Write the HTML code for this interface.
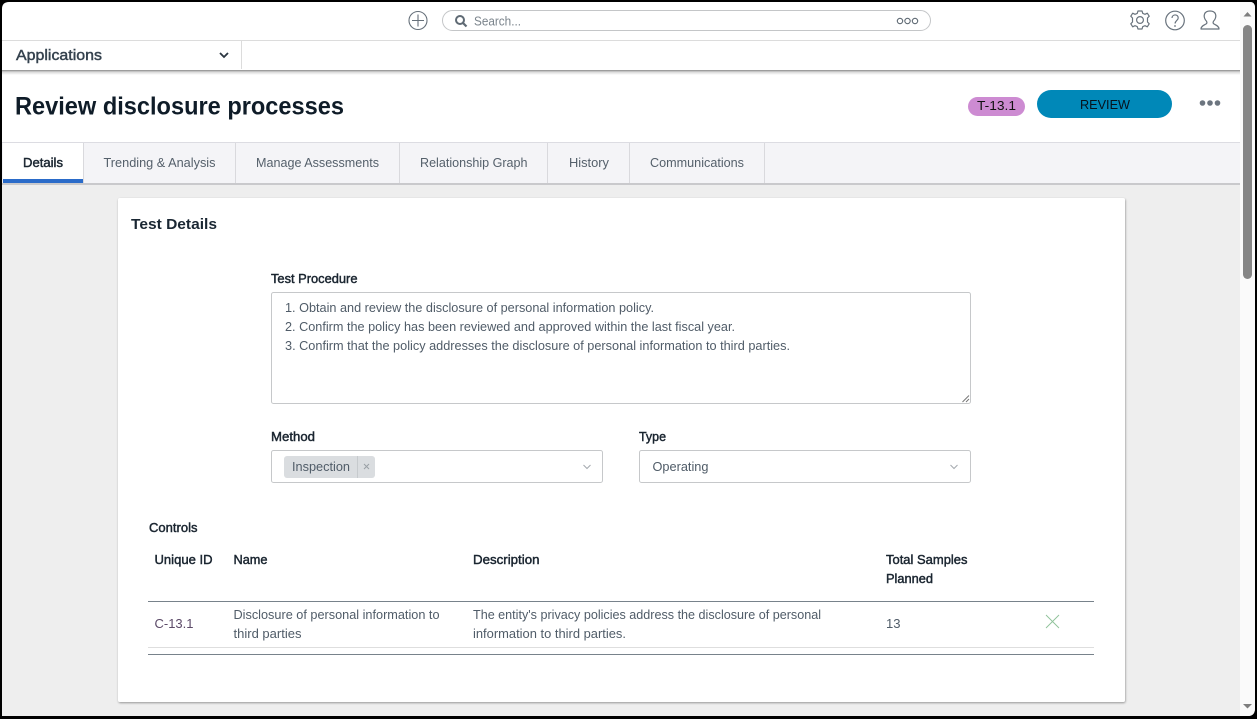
<!DOCTYPE html>
<html lang="en"><head><meta charset="utf-8"><title>Review disclosure processes</title>
<style>
html,body{margin:0;padding:0;width:1257px;height:719px;overflow:hidden;background:#000}
svg{position:absolute;left:0;top:0;display:block}
text{font-family:"Liberation Sans",sans-serif;font-size:12.5px;fill:#55606b}
.b{fill:#1a2530;stroke:#1a2530;stroke-width:.45px;font-size:13px}
.d{fill:#505c68}
</style></head><body>
<svg width="1257" height="719" viewBox="0 0 1257 719" xmlns="http://www.w3.org/2000/svg">
<defs>
<clipPath id="w"><path d="M9 2H1250Q1255 2 1255 8V708Q1255 716 1248 716H2V9Q2 2 9 2Z"/></clipPath>
<linearGradient id="sh" x1="0" y1="0" x2="0" y2="1"><stop offset="0" stop-color="#8a8a8a"/><stop offset=".4" stop-color="#d8d8d8"/><stop offset="1" stop-color="#fff"/></linearGradient>
<filter id="cs" x="-2%" y="-2%" width="104%" height="104%"><feDropShadow dx="0.500" dy="1" stdDeviation="1" flood-color="#000" flood-opacity=".38"/></filter>
</defs>
<rect width="1257" height="719" fill="#000"/>
<g clip-path="url(#w)">
<rect x="0" y="0" width="1257" height="719" fill="#fff"/>
<!-- top bar -->
<rect x="2" y="40" width="1238" height="1" fill="#dcdcdc"/>
<rect x="241" y="41" width="1" height="28" fill="#dcdcdc"/>
<rect x="2" y="70" width="1238" height="5" fill="url(#sh)"/>
<circle cx="418" cy="20.500" r="9" fill="none" stroke="#66707a" stroke-width="1.100"/>
<path d="M418 14.500V26.500M412 20.500H424" stroke="#66707a" stroke-width="1.100"/>
<rect x="442.500" y="10.500" width="488" height="20" rx="10" fill="#fff" stroke="#c4c6c8"/>
<circle cx="460" cy="20" r="4" fill="none" stroke="#5f6a74" stroke-width="2"/>
<path d="M463 23L466.500 26.500" stroke="#5f6a74" stroke-width="2.200"/>
<text x="474" y="25.500" textLength="47" lengthAdjust="spacingAndGlyphs" style="fill:#7b848c">Search...</text>
<g fill="none" stroke="#5f6a74" stroke-width="1.100"><circle cx="900" cy="21" r="2.700"/><circle cx="907.500" cy="21" r="2.700"/><circle cx="915" cy="21" r="2.700"/></g>
<!-- gear, help, user -->
<g fill="none" stroke="#69737d" stroke-width="1.200" stroke-linejoin="round">
<circle cx="1140" cy="20" r="3.400"/>
<path d="M1138 11H1142L1142.800 13.400L1145 14.300L1147.300 13.200L1149.200 16.200L1147.500 18V22L1149.200 23.800L1147.300 26.800L1145 25.700L1142.800 26.600L1142 29H1138L1137.200 26.600L1135 25.700L1132.700 26.800L1130.800 23.800L1132.500 22V18L1130.800 16.200L1132.700 13.200L1135 14.300L1137.200 13.400Z"/>
<circle cx="1175" cy="20.500" r="9.300"/>
<path d="M1172 18C1172.200 13.800 1178.300 14 1178.200 18C1178.100 20.600 1175.100 20.700 1175.100 23.500"/>
<path d="M1201 29H1219C1219 26 1216 25.200 1214 24C1212.500 23 1213 21.500 1214.500 20C1217 16 1216 11 1210 11C1204 11 1203 16 1205.500 20C1207 21.500 1207.500 23 1206 24C1204 25.200 1201 26 1201 29Z"/>
</g>
<circle cx="1175" cy="26" r=".9" fill="#69737d"/>
<!-- apps -->
<text x="16" y="60" textLength="86" lengthAdjust="spacingAndGlyphs" style="font-size:15px;fill:#35424e;stroke:#35424e;stroke-width:.45px">Applications</text>
<path d="M220 53L224 57L228 53" fill="none" stroke="#2a3540" stroke-width="1.800"/>
<!-- title -->
<text x="15" y="114.500" textLength="329" lengthAdjust="spacingAndGlyphs" style="font-size:25px;font-weight:bold;fill:#0f1c28">Review disclosure processes</text>
<rect x="968" y="97" width="57" height="19" rx="9.500" fill="#cd8bd2"/>
<text x="977" y="110" textLength="39" lengthAdjust="spacingAndGlyphs" style="font-size:13px;fill:#111">T-13.1</text>
<rect x="1037" y="90" width="135" height="28" rx="14" fill="#0088b8"/>
<text x="1080" y="109" textLength="50" lengthAdjust="spacingAndGlyphs" style="font-size:12.500px;fill:#06121c">REVIEW</text>
<g fill="#6c757f"><circle cx="1202.500" cy="103" r="2.800"/><circle cx="1210" cy="103" r="2.800"/><circle cx="1217.500" cy="103" r="2.800"/></g>
<!-- body bg -->
<rect x="2" y="184" width="1238" height="532" fill="#eee"/>
<!-- tabs -->
<rect x="2" y="142" width="1238" height="41" fill="#f4f4f7"/>
<rect x="2" y="142" width="1238" height="1" fill="#dcdce2"/>
<rect x="2" y="183" width="1238" height="2" fill="#c9c9cc"/>
<rect x="3" y="143" width="80" height="40" fill="#fff"/>
<rect x="3" y="179" width="80" height="4" fill="#2a6bc9"/>
<g fill="#d9d9dd"><rect x="83" y="143" width="1" height="40"/><rect x="235" y="143" width="1" height="40"/><rect x="399" y="143" width="1" height="40"/><rect x="547" y="143" width="1" height="40"/><rect x="629" y="143" width="1" height="40"/><rect x="764" y="143" width="1" height="40"/></g>
<text class="b" x="23" y="167" textLength="40" lengthAdjust="spacingAndGlyphs">Details</text>
<text x="103.500" y="167" textLength="112" lengthAdjust="spacingAndGlyphs">Trending &amp; Analysis</text>
<text x="256" y="167" textLength="123" lengthAdjust="spacingAndGlyphs">Manage Assessments</text>
<text x="420" y="167" textLength="107.500" lengthAdjust="spacingAndGlyphs">Relationship Graph</text>
<text x="569" y="167" textLength="40" lengthAdjust="spacingAndGlyphs">History</text>
<text x="650" y="167" textLength="94" lengthAdjust="spacingAndGlyphs">Communications</text>
<!-- card -->
<rect x="118" y="198" width="1007" height="504" rx="2" fill="#fff" filter="url(#cs)"/>
<text x="131" y="229" textLength="86" lengthAdjust="spacingAndGlyphs" style="font-size:15px;font-weight:bold;fill:#1a2733">Test Details</text>
<text class="b" x="271" y="283" textLength="86.500" lengthAdjust="spacingAndGlyphs">Test Procedure</text>
<rect x="271.500" y="292.500" width="699" height="111" rx="2" fill="#fff" stroke="#c6c8ca"/>
<text class="d" x="285" y="312" textLength="369" lengthAdjust="spacingAndGlyphs">1. Obtain and review the disclosure of personal information policy.</text>
<text class="d" x="285" y="331" textLength="450" lengthAdjust="spacingAndGlyphs">2. Confirm the policy has been reviewed and approved within the last fiscal year.</text>
<text class="d" x="285" y="350" textLength="505" lengthAdjust="spacingAndGlyphs">3. Confirm that the policy addresses the disclosure of personal information to third parties.</text>
<path d="M962.500 402L969 395.500M966 402L969 399" stroke="#777" stroke-width="1"/>
<text class="b" x="271" y="441" textLength="44" lengthAdjust="spacingAndGlyphs">Method</text>
<rect x="271.500" y="450.500" width="331" height="32" rx="2" fill="#fff" stroke="#c6c8ca"/>
<rect x="284" y="456" width="91" height="22" rx="3" fill="#dadde0"/>
<rect x="357" y="456" width="1" height="22" fill="#c6cacd"/>
<text class="d" x="292" y="471" textLength="58" lengthAdjust="spacingAndGlyphs">Inspection</text>
<path d="M364 464L369 469M369 464L364 469" stroke="#9aa0a6" stroke-width="1"/>
<path d="M583.500 465L587 468.500L590.500 465" fill="none" stroke="#a4a9ae"/>
<text class="b" x="639" y="441" textLength="27" lengthAdjust="spacingAndGlyphs">Type</text>
<rect x="639.500" y="450.500" width="331" height="32" rx="2" fill="#fff" stroke="#c6c8ca"/>
<text class="d" x="652.500" y="471" textLength="56" lengthAdjust="spacingAndGlyphs">Operating</text>
<path d="M950.500 465L954 468.500L957.500 465" fill="none" stroke="#a4a9ae"/>
<!-- table -->
<text class="b" x="149" y="532" textLength="48.500" lengthAdjust="spacingAndGlyphs">Controls</text>
<text class="b" x="154.500" y="564" textLength="58" lengthAdjust="spacingAndGlyphs">Unique ID</text>
<text class="b" x="233.500" y="564" textLength="34" lengthAdjust="spacingAndGlyphs">Name</text>
<text class="b" x="473" y="564" textLength="66.500" lengthAdjust="spacingAndGlyphs">Description</text>
<text class="b" x="886" y="564" textLength="81.500" lengthAdjust="spacingAndGlyphs">Total Samples</text>
<text class="b" x="886" y="583" textLength="47" lengthAdjust="spacingAndGlyphs">Planned</text>
<rect x="148" y="601" width="946" height="1" fill="#78828b"/>
<text x="154.500" y="628" textLength="39" lengthAdjust="spacingAndGlyphs" style="fill:#5c4a68">C-13.1</text>
<text class="d" x="233.500" y="619" textLength="206" lengthAdjust="spacingAndGlyphs">Disclosure of personal information to</text>
<text class="d" x="233.500" y="638" textLength="68" lengthAdjust="spacingAndGlyphs">third parties</text>
<text class="d" x="473" y="619" textLength="348" lengthAdjust="spacingAndGlyphs">The entity's privacy policies address the disclosure of personal</text>
<text class="d" x="473" y="638" textLength="153" lengthAdjust="spacingAndGlyphs">information to third parties.</text>
<text class="d" x="886" y="628" textLength="14.500" lengthAdjust="spacingAndGlyphs">13</text>
<path d="M1046 615L1059 628M1059 615L1046 628" stroke="#8fc29a" stroke-width=".9"/>
<rect x="148" y="647" width="946" height="1" fill="#dedede"/>
<rect x="148" y="654" width="946" height="1" fill="#78828b"/>
<!-- scrollbar -->
<rect x="1240" y="2" width="15" height="714" fill="#fafafa"/>
<path d="M1243.500 16.500L1247.500 12L1251.500 16.500Z" fill="#7e7e7e"/>
<rect x="1243" y="25" width="9" height="254" rx="4.500" fill="#868686"/>
<path d="M1243 704H1252L1247.500 708.500Z" fill="#7e7e7e"/>
</g>
</svg>
</body></html>
